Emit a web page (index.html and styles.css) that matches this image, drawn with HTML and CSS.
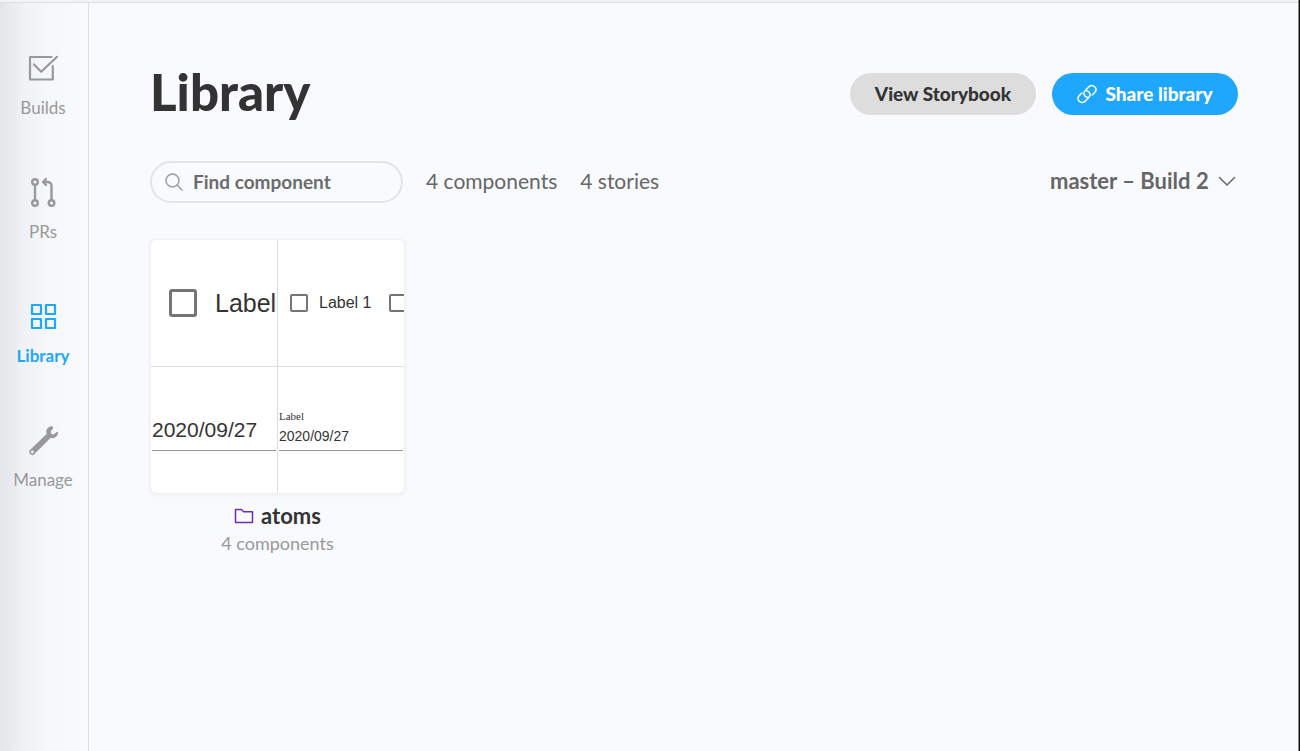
FILE: index.html
```html
<!DOCTYPE html>
<html lang="en">
<head>
<meta charset="utf-8">
<title>Library</title>
<link rel="stylesheet" href="styles.css">
</head>
<body>
<div class="app">
  <nav class="sidebar" aria-label="Main">
    <a class="nav-item" href="#builds">
      <svg class="nav-icon" viewBox="0 0 32 32" fill="none" stroke="currentColor" stroke-width="2.2" stroke-linecap="round" stroke-linejoin="round"><path d="M24.500 5H3v22.500h22.800V14"/><path d="M7 12.500l7.200 7.200L30 4.800"/></svg>
      <span>Builds</span>
    </a>
    <a class="nav-item" href="#prs">
      <svg class="nav-icon" viewBox="0 0 32 32" fill="none" stroke="currentColor" stroke-width="2.4" stroke-linecap="round" stroke-linejoin="round"><circle cx="8" cy="6" r="2.800"/><circle cx="8" cy="27" r="2.800"/><circle cx="24.500" cy="27" r="2.800"/><path d="M8 9v15M24.500 24V10q0-4-4-4h-4M19 3l-3 3 3 3"/></svg>
      <span>PRs</span>
    </a>
    <a class="nav-item nav-item-active" href="#library" aria-current="page">
      <svg class="nav-icon" viewBox="0 0 32 32" fill="none" stroke="currentColor" stroke-width="2.2" stroke-linejoin="round"><path d="M5 5h9v9H5zM19 5h9v9h-9zM5 19h9v9H5zM19 19h9v9h-9z"/></svg>
      <span>Library</span>
    </a>
    <a class="nav-item" href="#manage">
      <svg class="nav-icon" viewBox="0 0 32 32"><path fill="currentColor" fill-rule="evenodd" d="M25 2.300c-4 0-6.600 3.600-5.400 7.600L3.200 25.800a3 3 0 1 0 4.300 4.300L23.400 14c4 1 7.600-1.500 7.600-5.400q0-1.200-1.300-.6l-2.500 2.100q-1.500.8-2.600-.3-1.400-1.500-.4-3l1.900-2.600q.5-1.700-1.100-1.900zM5.300 26.600a1.400 1.400 0 1 1 0 2.800 1.400 1.400 0 0 1 0-2.800z"/></svg>
      <span>Manage</span>
    </a>
  </nav>
  <main class="content">
    <header class="page-header">
      <h1 class="page-title">Library</h1>
      <div class="actions">
        <button class="button button-secondary" type="button">View Storybook</button>
        <button class="button button-primary" type="button">
          <svg class="link-icon" viewBox="0 0 20 20" fill="none" stroke="currentColor" stroke-width="1.500" stroke-linecap="round"><path d="M10.200 13.300C6.800 12.600 5.900 8.800 8.300 6.500L11.900 2.700C15.900-.6 21.400 4.300 17.700 8.600L15.200 11"/><path d="M9.800 6.700C13.200 7.400 14.100 11.200 11.700 13.500L8.100 17.300C4.100 20.600-1.400 15.700 2.300 11.400L4.800 9"/></svg>
          Share library
        </button>
      </div>
    </header>
    <div class="toolbar">
      <label class="search">
        <svg class="search-icon" viewBox="0 0 18 18" fill="none" stroke="currentColor" stroke-width="1.400" stroke-linecap="round"><circle cx="7.500" cy="7.500" r="6.500"/><path d="M12.300 12.300L17 17"/></svg>
        <input class="search-input" type="text" placeholder="Find component" aria-label="Find component">
      </label>
      <span class="stat">4 components</span>
      <span class="stat">4 stories</span>
      <label class="build-picker">
        <select class="build-select" aria-label="Build"><option>master – Build 2</option></select>
        <svg class="chevron" viewBox="0 0 18 18" fill="none" stroke="currentColor" stroke-width="1.500" stroke-linecap="round" stroke-linejoin="round"><path d="M1.500 5.500L9 13l7.500-7.500"/></svg>
      </label>
    </div>
    <section class="card">
      <div class="preview">
        <div class="cell cell-check">
          <label class="check check-large"><input class="box" type="checkbox">Label</label>
        </div>
        <div class="cell cell-checks">
          <label class="check"><input class="box" type="checkbox">Label 1</label>
          <input class="box" type="checkbox" aria-label="Label 2">
        </div>
        <div class="cell cell-date">
          <input class="date date-large" type="text" value="2020/09/27" aria-label="Date">
        </div>
        <div class="cell cell-date">
          <label class="date-label" for="labelled-date">Label</label>
          <input class="date" id="labelled-date" type="text" value="2020/09/27">
        </div>
      </div>
      <a class="card-title" href="#atoms">
        <svg class="folder-icon" viewBox="0 0 20 16" fill="none" stroke="currentColor" stroke-width="1.500" stroke-linejoin="round"><path d="M1.500 1.500h6l2.300 2.300h8.700v10.700h-17z"/></svg>
        atoms
      </a>
      <span class="card-count">4 components</span>
    </section>
  </main>
</div>
</body>
</html>
```
FILE: styles.css
```css
* { box-sizing: border-box; }

body {
  margin: 0;
  background: #f8fafe;
  color: #333;
  font-family: Lato, "Open Sans", sans-serif;
}

a { color: inherit; text-decoration: none; }

.app {
  display: flex;
  min-height: 100vh;
  padding: 3px 2px 0 0;
  background:
    linear-gradient(90deg, #888 1px, #111 1px) right / 2px 100% no-repeat,
    linear-gradient(#f3f4f6 2px, #dddee1 2px) top / 100% 3px no-repeat;
}

.sidebar {
  display: flex;
  flex: none;
  flex-direction: column;
  gap: 56px;
  width: 89px;
  padding: 49px 2px 0 0;
  border-right: 1px solid #dddfe3;
  background: linear-gradient(90deg, #e4e5e9 0, #eff1f5 22px, #f5f7fb 48px, #f8fafe 80px);
}

.nav-item {
  display: flex;
  flex-direction: column;
  align-items: center;
  gap: 12px;
  color: #999;
  font-size: 17px;
  line-height: 24px;
}

.nav-item-active { color: #1ea7fd; font-weight: 700; }

.nav-icon { width: 32px; height: 32px; }

.content { flex: 1; padding: 70px 60px 40px 61px; }

.page-header {
  display: flex;
  align-items: center;
  justify-content: space-between;
  height: 42px;
  margin-bottom: 46px;
}

.page-title { margin: 0; padding-bottom: 4px; font-size: 51px; font-weight: 900; line-height: 56px; }

.actions { display: flex; gap: 16px; }

.button {
  display: flex;
  align-items: center;
  justify-content: center;
  gap: 8px;
  min-width: 186px;
  height: 42px;
  padding: 0 20px;
  border: 0;
  border-radius: 21px;
  font: 900 19px/24px Lato, "Open Sans", sans-serif;
}

.button-secondary { background: #ddd; color: #333; }
.button-primary { background: #1ea7fd; color: #fff; }
.link-icon { width: 20px; height: 20px; }

.toolbar { display: flex; align-items: center; gap: 23px; margin-bottom: 36px; }

.search {
  display: flex;
  align-items: center;
  gap: 10px;
  width: 253px;
  height: 42px;
  padding: 0 13px;
  border: 2px solid #e2e4e8;
  border-radius: 21px;
  color: #999;
}

.search-icon { flex: none; width: 18px; height: 18px; }

.search-input {
  width: 100%;
  min-width: 0;
  padding: 0;
  border: 0;
  outline: 0;
  background: none;
  color: #666;
  font: 700 19px/24px Lato, "Open Sans", sans-serif;
}

.search-input::placeholder { color: #6c6c6c; opacity: 1; }

.stat { padding-bottom: 2px; color: #666; font-size: 21px; line-height: 28px; }

.build-picker {
  display: flex;
  align-items: center;
  gap: 8px;
  margin-left: auto;
  padding: 0 2px 2px 0;
  color: #666;
}

.build-select {
  appearance: none;
  padding: 0;
  border: 0;
  background: none;
  color: #666;
  font: 700 22px/28px Lato, "Open Sans", sans-serif;
}

.chevron { width: 18px; height: 18px; }

.card { display: flex; flex-direction: column; align-items: center; width: 255px; }

.preview {
  display: grid;
  grid-template-columns: 1fr 1fr;
  gap: 1px;
  width: 100%;
  overflow: hidden;
  border: 1px solid #f2f3f5;
  border-radius: 6px;
  background: #ddd;
  box-shadow: 0 1px 4px rgba(0, 0, 0, 0.06);
  color: #333;
  font-family: "Liberation Sans", Arial, sans-serif;
}

.cell { height: 126px; overflow: hidden; background: #fff; white-space: nowrap; }

.cell-check, .cell-checks { display: flex; align-items: center; }
.cell-check { padding-left: 18px; }
.cell-checks { gap: 17px; padding-left: 12px; }

.check { display: flex; align-items: center; gap: 11px; font-size: 16px; line-height: 20px; }
.check-large { gap: 18px; font-size: 25px; line-height: 30px; }

.box {
  flex: none;
  appearance: none;
  width: 18px;
  height: 18px;
  margin: 0;
  border: 2px solid #757575;
  border-radius: 2px;
}

.check-large .box { width: 28px; height: 28px; border-width: 3px; border-radius: 3px; }

.cell-date {
  display: flex;
  flex-direction: column;
  justify-content: flex-end;
  padding: 0 1px 42px;
}

.date {
  width: 100%;
  padding: 0 0 4px;
  border: 0;
  border-bottom: 1px solid #999;
  outline: 0;
  background: none;
  color: #333;
  font: 14px/20px "Liberation Sans", Arial, sans-serif;
}

.date-large { padding-bottom: 7px; font-size: 21px; line-height: 26px; }

.date-label { padding-bottom: 3px; font: 11px/14px "Liberation Serif", "Times New Roman", serif; }

.card-title {
  display: flex;
  align-items: center;
  gap: 7px;
  margin-top: 7px;
  font-size: 22px;
  font-weight: 700;
  line-height: 30px;
}

.folder-icon { width: 20px; height: 16px; color: #6f2cac; }

.card-count { color: #999; font-size: 18px; line-height: 24px; }
```
